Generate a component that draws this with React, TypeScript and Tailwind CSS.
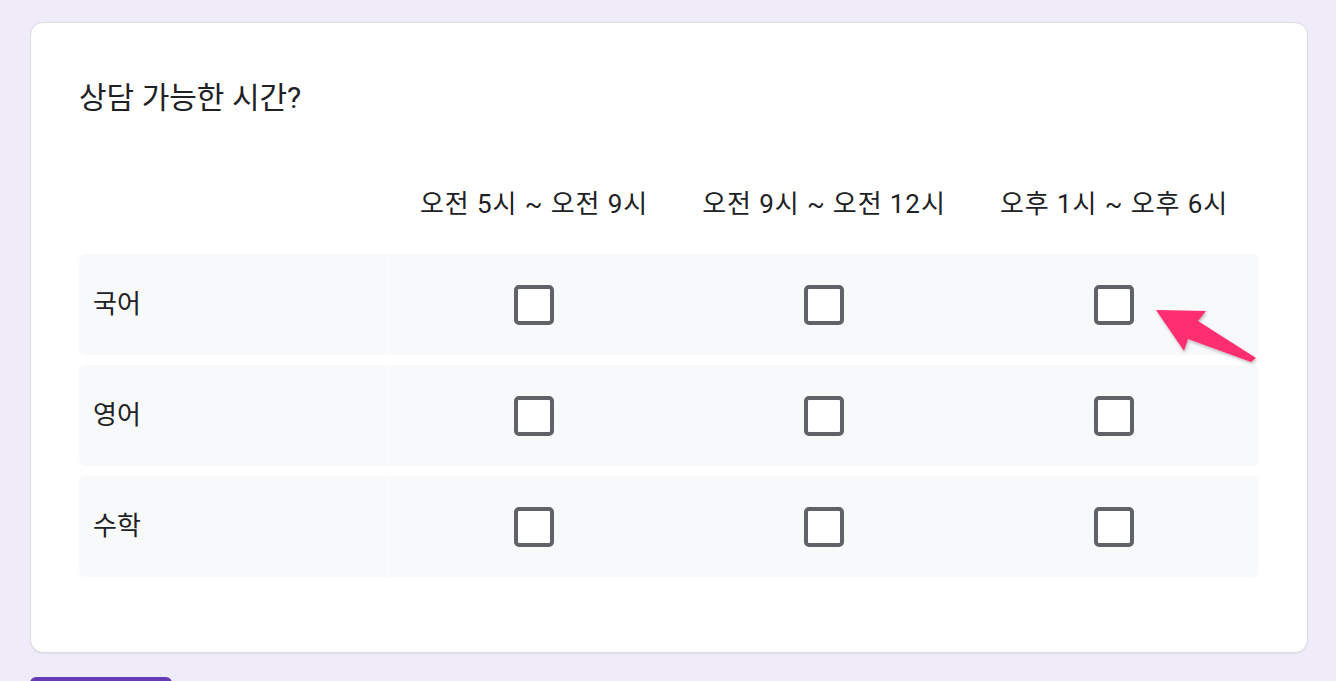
import React from 'react';

const columns = ['오전 5시 ~ 오전 9시', '오전 9시 ~ 오전 12시', '오후 1시 ~ 오후 6시'];
const rows = ['국어', '영어', '수학'];

const font = { fontFamily: 'Roboto, "Noto Sans CJK KR", sans-serif' };

const Checkbox: React.FC = () => (
  <div className="w-10 h-10 rounded-[5px] border-4 border-[#5f6368] bg-white" />
);

export default function App() {
  return (
    <div className="min-h-[681px] bg-[#f0ebf8] px-[30px] pt-[22px] overflow-hidden" style={font}>
      <div className="relative w-[1278px] h-[631px] bg-white border border-[#dadce0] rounded-[13px] shadow-[0_1px_1px_rgba(0,0,0,0.06)] pl-[48px] pt-[57px]">
        <h2 className="text-[30px] leading-[36px] text-[#202124] font-normal">상담 가능한 시간?</h2>

        <div className="mt-[64px] grid grid-cols-[310px_290px_290px_290px] h-[48px] items-center text-[26px] tracking-[0.9px] text-[#202124]">
          <div />
          {columns.map(c => (
            <div key={c} className="text-center">{c}</div>
          ))}
        </div>

        <div className="mt-[26px] flex flex-col gap-[10px] w-[1180px]">
          {rows.map(r => (
            <div key={r} className="grid grid-cols-[310px_290px_290px_290px] h-[101px] bg-[#f8f9fa] rounded-[6px] items-center">
              <div className="h-full flex items-center pl-[14px] text-[26px] text-[#202124] border-r border-[#fdfdfe]">{r}</div>
              {columns.map(c => (
                <div key={c} className="flex justify-center">
                  <Checkbox />
                </div>
              ))}
            </div>
          ))}
        </div>

        <svg className="absolute left-[1115px] top-[280px]" width="120" height="90" viewBox="1145 302 120 90">
          <defs>
            <filter id="sh" x="-20%" y="-20%" width="140%" height="140%">
              <feDropShadow dx="1" dy="2" stdDeviation="1.5" floodColor="#000" floodOpacity="0.25" />
            </filter>
          </defs>
          <polygon
            points="1155,309 1205,310 1197,320 1255,357 1250,361 1187,338 1183,350"
            fill="#ff2d6f"
            filter="url(#sh)"
          />
        </svg>
      </div>

      <div className="mt-[24px] w-[142px] h-[10px] bg-[#673ab7] rounded-t-[6px]" />
    </div>
  );
}
